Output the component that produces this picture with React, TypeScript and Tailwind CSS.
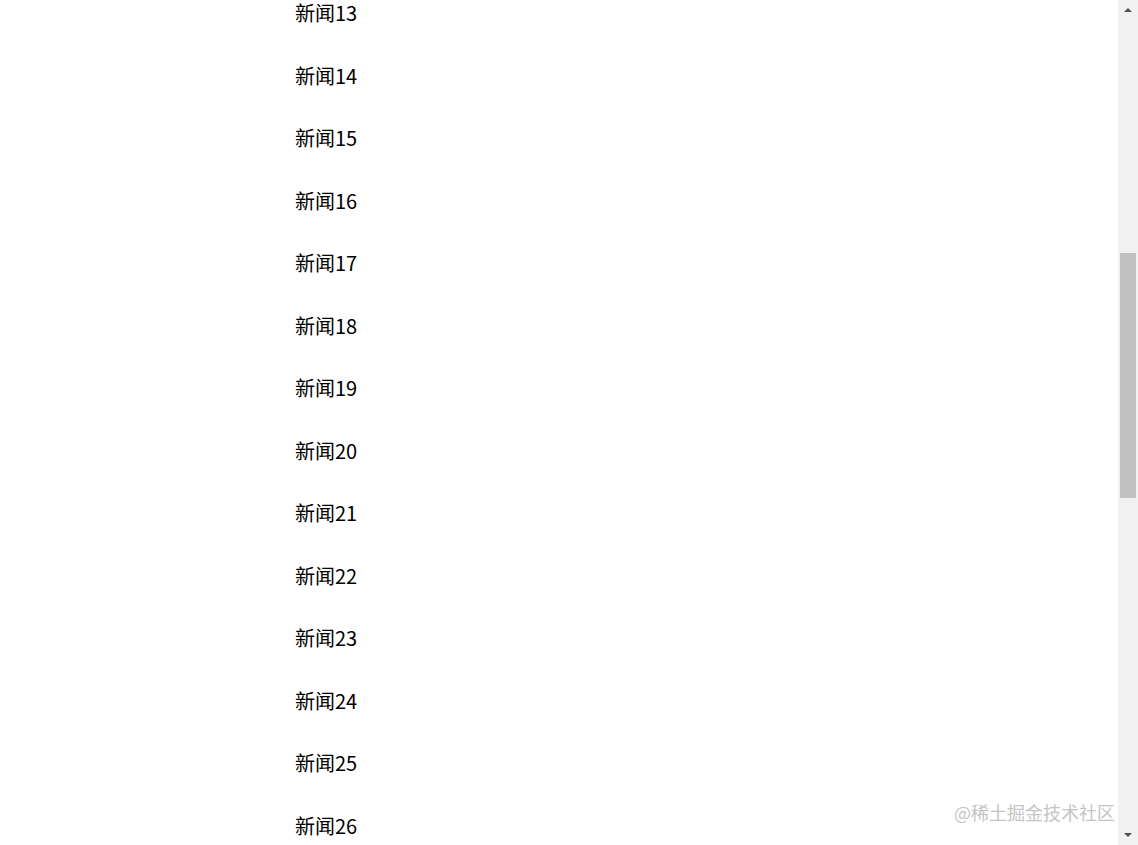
import React from 'react';

const items = Array.from({ length: 15 }, (_, i) => `新闻${i + 13}`);

export default function App() {
  return (
    <div
      className="relative flex h-[845px] w-[1138px] overflow-hidden bg-white text-black"
      style={{ fontFamily: '"Noto Sans CJK SC", "Noto Sans", sans-serif' }}
    >
      {/* news list, scrolled part way down */}
      <div className="flex-1 overflow-hidden">
        <ul className="-mt-[18px] pl-[295px]">
          {items.map((title) => (
            <li key={title} className="h-[62.5px] text-[20px] leading-[62.5px]">
              {title}
            </li>
          ))}
        </ul>
      </div>

      {/* browser scrollbar */}
      <div className="flex w-[20px] flex-col bg-[#f1f1f1]">
        <div className="flex h-[20px] items-center justify-center">
          <div className="h-0 w-0 border-x-[4px] border-b-[4px] border-x-transparent border-b-[#505050]" />
        </div>
        <div className="flex-1 px-[2px]">
          <div className="mt-[233px] h-[245px] bg-[#c1c1c1]" />
        </div>
        <div className="flex h-[20px] items-center justify-center">
          <div className="h-0 w-0 border-x-[4px] border-t-[4px] border-x-transparent border-t-[#505050]" />
        </div>
      </div>

      {/* watermark */}
      <div className="absolute bottom-[21px] right-[23px] text-[18px] leading-[24px] text-[#c4c4c4]">
        @稀土掘金技术社区
      </div>
    </div>
  );
}
